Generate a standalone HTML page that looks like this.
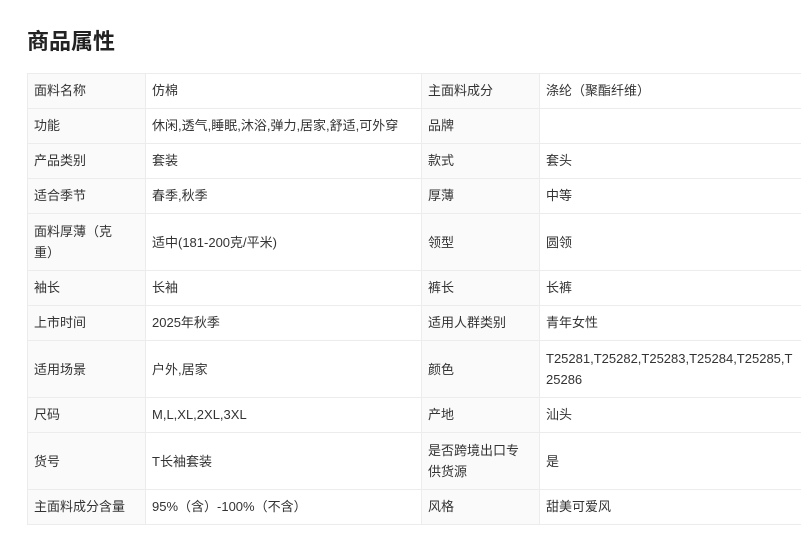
<!DOCTYPE html>
<html><head><meta charset="utf-8"><style>
html,body{margin:0;padding:0;background:#fff;width:801px;height:548px;overflow:hidden}
body{font-family:"Liberation Sans","Noto Sans CJK SC",sans-serif;color:#333}
h1{position:absolute;left:27px;top:27px;margin:0;font-size:22px;line-height:30px;font-weight:bold;color:#222}
table{position:absolute;left:27px;top:73px;border-collapse:collapse;table-layout:fixed;width:840px}
td{border:1px solid #ececec;font-size:13px;line-height:21px;padding:6px 6px 7px 6px;white-space:nowrap;vertical-align:middle;overflow:hidden}
td.l{background:#fafafa}
tr.d td{line-height:21px;padding-top:7px;padding-bottom:7px}
</style></head><body>
<h1>商品属性</h1>
<table>
<colgroup><col style="width:118px"><col style="width:276px"><col style="width:118px"><col style="width:328px"></colgroup>
<tr><td class="l">面料名称</td><td>仿棉</td><td class="l">主面料成分</td><td>涤纶（聚酯纤维）</td></tr>
<tr><td class="l">功能</td><td>休闲,透气,睡眠,沐浴,弹力,居家,舒适,可外穿</td><td class="l">品牌</td><td></td></tr>
<tr><td class="l">产品类别</td><td>套装</td><td class="l">款式</td><td>套头</td></tr>
<tr><td class="l">适合季节</td><td>春季,秋季</td><td class="l">厚薄</td><td>中等</td></tr>
<tr class="d"><td class="l">面料厚薄（克<br>重）</td><td>适中(181-200克/平米)</td><td class="l">领型</td><td>圆领</td></tr>
<tr><td class="l">袖长</td><td>长袖</td><td class="l">裤长</td><td>长裤</td></tr>
<tr><td class="l">上市时间</td><td>2025年秋季</td><td class="l">适用人群类别</td><td>青年女性</td></tr>
<tr class="d"><td class="l">适用场景</td><td>户外,居家</td><td class="l">颜色</td><td>T25281,T25282,T25283,T25284,T25285,T<br>25286</td></tr>
<tr><td class="l">尺码</td><td>M,L,XL,2XL,3XL</td><td class="l">产地</td><td>汕头</td></tr>
<tr class="d"><td class="l">货号</td><td>T长袖套装</td><td class="l">是否跨境出口专<br>供货源</td><td>是</td></tr>
<tr><td class="l">主面料成分含量</td><td>95%（含）-100%（不含）</td><td class="l">风格</td><td>甜美可爱风</td></tr>
</table>
</body></html>
